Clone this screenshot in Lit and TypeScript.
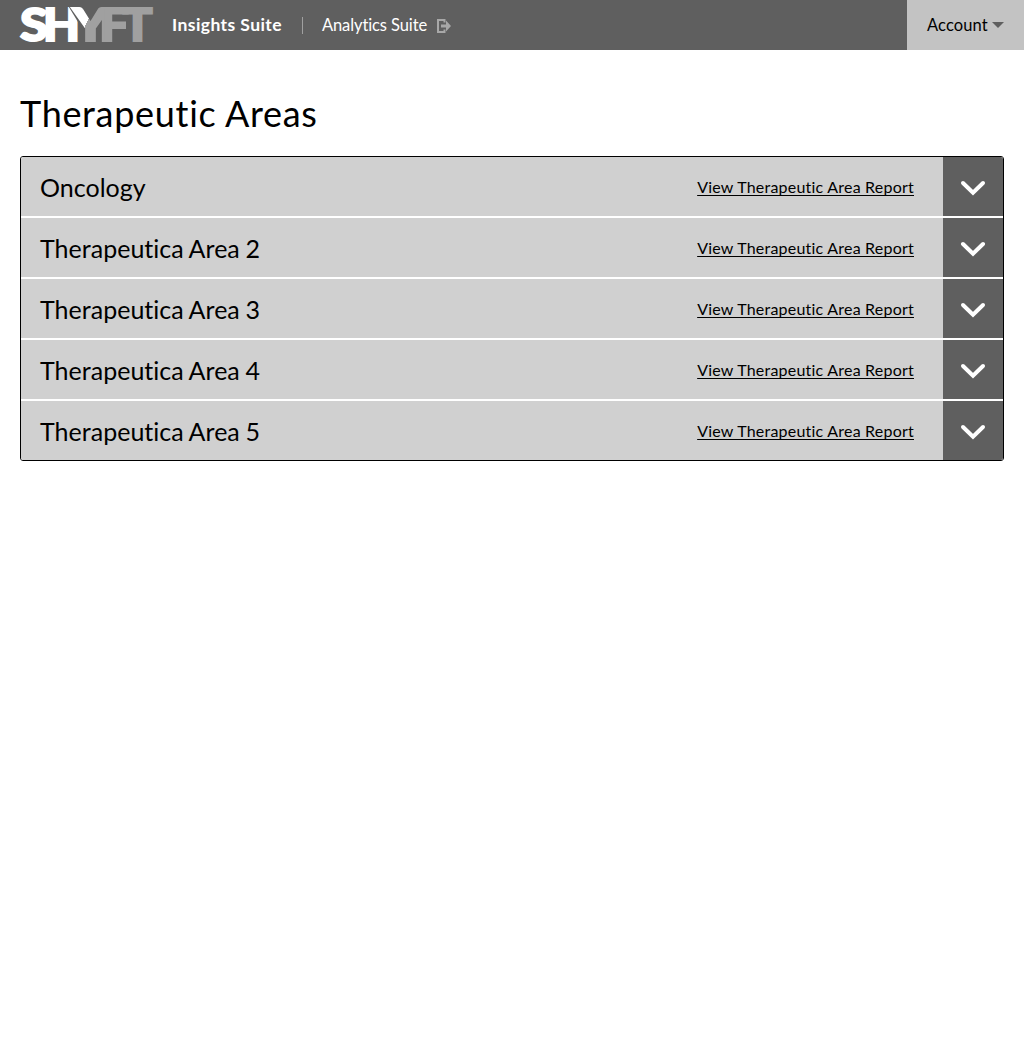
import { LitElement, html, css } from "lit";
import { customElement } from "lit/decorators.js";

@customElement("app-logo")
export class AppLogo extends LitElement {
  static styles = css`
    :host { display: block; width: 134px; height: 50px; }
    .logo { display: block; overflow: visible; }
    .word { font-family: Lato, "Open Sans", sans-serif; font-weight: 900; font-size: 45px; stroke-width: 2; }
    .light { fill: #fff; stroke: #fff; }
    .split { fill: url(#arm); stroke: url(#arm); }
    .dim { fill: #a0a0a0; stroke: #a0a0a0; }
    .gap { fill: none; stroke: #5f5f5f; stroke-width: 3; }
  `;
  render() {
    return html`<svg class="logo" width="134" height="50" viewBox="0 0 134 50" role="img" aria-label="SHYFT">
      <defs>
        <linearGradient id="arm" gradientUnits="userSpaceOnUse" x1="56" y1="17" x2="78" y2="27">
          <stop offset="0.5" stop-color="#fff" />
          <stop offset="0.5" stop-color="#a0a0a0" />
        </linearGradient>
      </defs>
      <g class="word">
        <text class="light" x="0" y="40.5" textLength="28" lengthAdjust="spacingAndGlyphs">S</text>
        <text class="light" x="23" y="40.5" textLength="37" lengthAdjust="spacingAndGlyphs">H</text>
        <path class="gap" d="M50 6L64 29" />
        <text class="split" x="52.5" y="40.5" textLength="36" lengthAdjust="spacingAndGlyphs">Y</text>
        <text class="dim" x="79" y="40.5" textLength="30" lengthAdjust="spacingAndGlyphs">F</text>
        <text class="dim" x="102.5" y="40.5" textLength="30" lengthAdjust="spacingAndGlyphs">T</text>
      </g>
    </svg>`;
  }
}

@customElement("area-row")
export class AreaRow extends LitElement {
  static properties = { name: {} };
  declare name: string;
  static styles = css`
    :host { display: flex; height: 59px; background: #d0d0d0; }
    .name { flex: 1; padding-left: 19px; font-size: 25px; line-height: 60px; letter-spacing: 0.02px; word-spacing: -0.7px; }
    .report { margin-right: 29px; font-size: 16px; line-height: 60px; letter-spacing: 0.22px; color: #000; text-decoration: underline; text-underline-offset: 2px; text-decoration-thickness: 1px; text-decoration-skip-ink: none; }
    .toggle { width: 60px; height: 59px; padding: 2px 0 0; border: 0; background: #5f5f5f; display: flex; align-items: center; justify-content: center; }
  `;
  render() {
    return html`<span class="name">${this.name}</span>
      <a class="report">View Therapeutic Area Report</a>
      <button class="toggle" aria-label="Expand">
        <svg width="26" height="16" viewBox="0 0 26 16"><path d="M3 3L13 12.7L23 3" fill="none" stroke="#fff" stroke-width="4" stroke-linecap="round" /></svg>
      </button>`;
  }
}

@customElement("app-root")
export class AppRoot extends LitElement {
  static styles = css`
    :host { display: block; font-family: Lato, "Open Sans", sans-serif; color: #000; background: #fff; min-height: 1047px; }
    .bar { display: flex; height: 50px; background: #5f5f5f; color: #fff; align-items: center; padding-left: 20px; line-height: 50px; }
    .current { margin-left: 18px; font-size: 17.5px; font-weight: 700; letter-spacing: 0.42px; }
    .rule { width: 1px; height: 17px; background: #a0a0a0; margin: 0 19px 0 20px; }
    .other { font-size: 16.5px; letter-spacing: -0.1px; }
    .exit { margin: 2px 0 0 10px; }
    .account { margin-left: auto; width: 97px; padding-left: 20px; height: 50px; background: #c3c3c3; color: #000; display: flex; align-items: center; font-size: 16.5px; letter-spacing: 0.1px; }
    .caret { margin-left: 4px; }
    .title { margin: 0; padding: 38px 20px 0; font-size: 36px; line-height: 50px; font-weight: 400; letter-spacing: 0.69px; }
    .list { margin: 18px 20px 0; border: 1px solid #000; border-radius: 3px; overflow: hidden; display: flex; flex-direction: column; gap: 2px; background: #fff; }
  `;
  render() {
    const areas = ["Oncology", "Therapeutica Area 2", "Therapeutica Area 3", "Therapeutica Area 4", "Therapeutica Area 5"];
    return html`<header class="bar">
        <app-logo></app-logo>
        <span class="current">Insights Suite</span>
        <span class="rule"></span>
        <span class="other">Analytics Suite</span>
        <svg class="exit" width="14" height="14" viewBox="0 0 14 14"><path d="M7.5 3.5V1H1V13H7.5V10.5" fill="none" stroke="#a8a8a8" stroke-width="2" /><path d="M4 5.5H9V1.5L14 7L9 12.5V8.5H4Z" fill="#a8a8a8" /></svg>
        <div class="account"><span>Account</span><svg class="caret" width="12" height="6" viewBox="0 0 12 6"><path d="M0 0H12L6 6Z" fill="#5f5f5f" /></svg></div>
      </header>
      <h1 class="title">Therapeutic Areas</h1>
      <main class="list">${areas.map((a) => html`<area-row .name=${a}></area-row>`)}</main>`;
  }
}
